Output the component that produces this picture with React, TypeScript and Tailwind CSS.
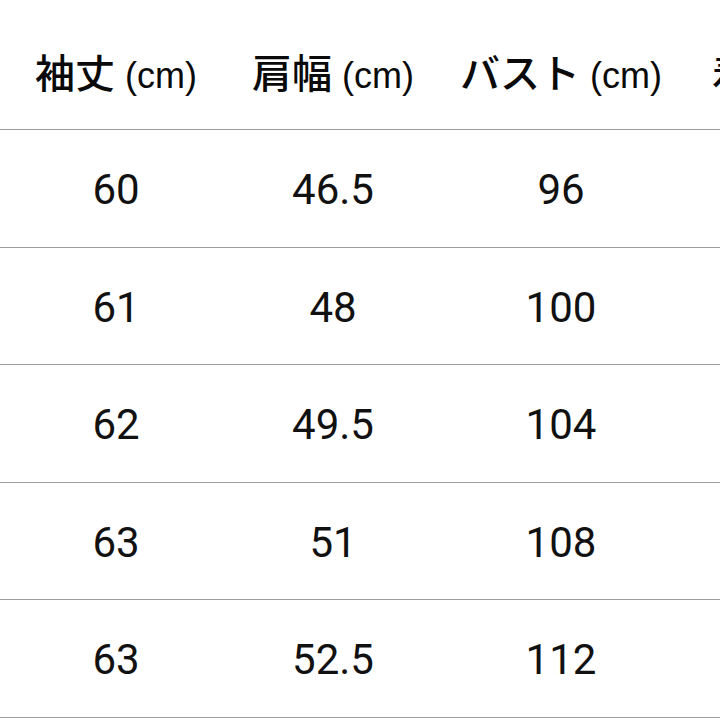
import React from "react";

const rows = [
  ["60", "46.5", "96"],
  ["61", "48", "100"],
  ["62", "49.5", "104"],
  ["63", "51", "108"],
  ["63", "52.5", "112"],
];

const heights = ["h-[118px]", "h-[117px]", "h-[118px]", "h-[117px]", "h-[118px]"];

function Head({ jp }: { jp: string }) {
  return (
    <span className="whitespace-nowrap text-[#0a0a0a]">
      <span className="text-[40px] [font-family:'Noto_Sans_CJK_JP',sans-serif] font-medium">{jp}</span>
      <span className="text-[36px] [font-family:'Liberation_Sans',Arial,sans-serif]"> (cm)</span>
    </span>
  );
}

export default function App() {
  const cols = ["w-[232px]", "w-[202px]", "w-[254px]"];
  return (
    <div className="w-[720px] h-[720px] overflow-hidden bg-white">
      <div className="flex h-[130px] pt-[15px] items-center border-b border-[#9e9e9e]">
        <div className={`${cols[0]} shrink-0 flex justify-center`}><Head jp="袖丈" /></div>
        <div className={`${cols[1]} shrink-0 flex justify-center`}><Head jp="肩幅" /></div>
        <div className={`${cols[2]} shrink-0 flex justify-center`}><Head jp="バスト" /></div>
        <div className="shrink-0 pl-[24px]"><Head jp="着丈" /></div>
      </div>
      {rows.map((r, i) => (
        <div key={i} className={`flex ${heights[i]} items-center border-b border-[#9e9e9e]`}>
          {r.map((v, j) => (
            <div
              key={j}
              className={`${cols[j]} shrink-0 flex justify-center text-[42px] text-[#111] [font-family:Roboto,sans-serif] pt-[2px]`}
            >
              {v}
            </div>
          ))}
        </div>
      ))}
    </div>
  );
}
